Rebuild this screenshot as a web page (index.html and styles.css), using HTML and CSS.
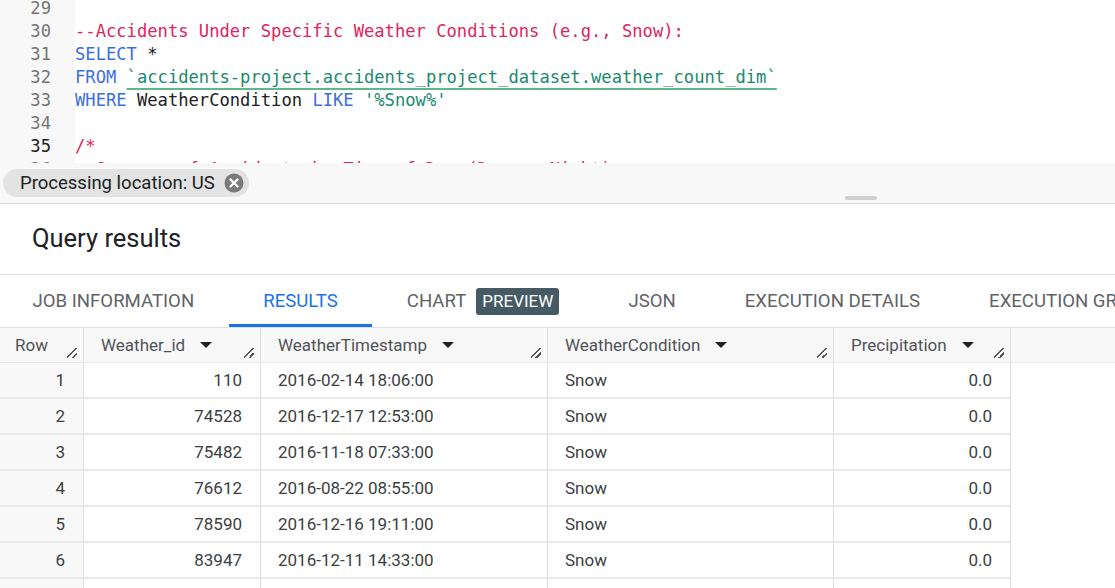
FILE: index.html
```html
<!DOCTYPE html>
<html>
<head>
<meta charset="utf-8">
<link rel="stylesheet" href="styles.css">
</head>
<body>
<div class="editor">
  <div class="gutter">
    <div class="ln">29</div>
    <div class="ln">30</div>
    <div class="ln">31</div>
    <div class="ln">32</div>
    <div class="ln">33</div>
    <div class="ln">34</div>
    <div class="ln active">35</div>
    <div class="ln">36</div>
  </div>
  <div class="code">
    <div class="cl">&nbsp;</div>
    <div class="cl"><span class="cm">--Accidents Under Specific Weather Conditions (e.g., Snow):</span></div>
    <div class="cl"><span class="kw">SELECT</span> *</div>
    <div class="cl"><span class="kw">FROM</span> <span class="str link">`accidents-project.accidents_project_dataset.weather_count_dim`</span></div>
    <div class="cl"><span class="kw">WHERE</span> WeatherCondition <span class="kw">LIKE</span> <span class="str">'%Snow%'</span></div>
    <div class="cl">&nbsp;</div>
    <div class="cl"><span class="cm">/*</span></div>
    <div class="cl"><span class="cm">- Summary of Accidents by Time of Day (Day vs Night)</span></div>
  </div>
</div>

<div class="statusbar">
  <div class="chip">
    <span class="chip-label">Processing location: US</span>
    <svg class="chip-x" width="20" height="20" viewBox="0 0 20 20"><circle cx="10" cy="10" r="9.5" fill="#7a7a7a"/><path d="M6.5 6.5 L13.5 13.5 M13.5 6.5 L6.5 13.5" stroke="#fff" stroke-width="2.4" stroke-linecap="round"/></svg>
  </div>
  <div class="grip"></div>
</div>

<div class="title">Query results</div>

<div class="tabs">
  <div class="tab">JOB INFORMATION</div>
  <div class="tab selected">RESULTS</div>
  <div class="tab">CHART <span class="badge">PREVIEW</span></div>
  <div class="tab">JSON</div>
  <div class="tab">EXECUTION DETAILS</div>
  <div class="tab">EXECUTION GRAPH</div>
</div>

<div class="grid">
  <div class="head">
    <div class="hc c0">Row<span class="rz"></span></div>
    <div class="hc c1">Weather_id<span class="arrow"></span><span class="rz"></span></div>
    <div class="hc c2">WeatherTimestamp<span class="arrow"></span><span class="rz"></span></div>
    <div class="hc c3">WeatherCondition<span class="arrow"></span><span class="rz"></span></div>
    <div class="hc c4">Precipitation<span class="arrow"></span><span class="rz"></span></div>
  </div>
  <div class="row"><div class="dc c0 num">1</div><div class="dc c1 num">110</div><div class="dc c2">2016-02-14 18:06:00</div><div class="dc c3">Snow</div><div class="dc c4 num">0.0</div></div>
  <div class="row"><div class="dc c0 num">2</div><div class="dc c1 num">74528</div><div class="dc c2">2016-12-17 12:53:00</div><div class="dc c3">Snow</div><div class="dc c4 num">0.0</div></div>
  <div class="row"><div class="dc c0 num">3</div><div class="dc c1 num">75482</div><div class="dc c2">2016-11-18 07:33:00</div><div class="dc c3">Snow</div><div class="dc c4 num">0.0</div></div>
  <div class="row"><div class="dc c0 num">4</div><div class="dc c1 num">76612</div><div class="dc c2">2016-08-22 08:55:00</div><div class="dc c3">Snow</div><div class="dc c4 num">0.0</div></div>
  <div class="row"><div class="dc c0 num">5</div><div class="dc c1 num">78590</div><div class="dc c2">2016-12-16 19:11:00</div><div class="dc c3">Snow</div><div class="dc c4 num">0.0</div></div>
  <div class="row"><div class="dc c0 num">6</div><div class="dc c1 num">83947</div><div class="dc c2">2016-12-11 14:33:00</div><div class="dc c3">Snow</div><div class="dc c4 num">0.0</div></div>
  <div class="row"><div class="dc c0 num">7</div><div class="dc c1 num">84512</div><div class="dc c2">2016-12-05 09:12:00</div><div class="dc c3">Snow</div><div class="dc c4 num">0.0</div></div>
</div>
</body>
</html>
```

FILE: styles.css
```css
* { box-sizing: border-box; }
html, body {
  margin: 0;
  padding: 0;
}
body {
  width: 1115px;
  height: 588px;
  overflow: hidden;
  background: #fff;
  font-family: Roboto, "Liberation Sans", sans-serif;
  color: #202124;
}

/* Editor */
.editor {
  height: 163px;
  overflow: hidden;
  display: flex;
  background: #fff;
}
.gutter {
  width: 75px;
  flex: none;
  background: #f8f8f8;
  margin-top: -3px;
  padding-right: 24px;
  text-align: right;
}
.ln, .cl {
  height: 23px;
  line-height: 23px;
  font-family: "DejaVu Sans Mono", "Liberation Mono", monospace;
  font-size: 17.15px;
  white-space: pre;
}
.ln { color: #757575; }
.ln.active { color: #202124; }
.code {
  margin-top: -3px;
  flex: 1;
  overflow: hidden;
  color: #202124;
}
.cm { color: #e0245e; }
.kw { color: #3b6fe0; }
.str { color: #1a8a6e; }
.link {
  text-decoration: underline;
  text-decoration-color: #5cb88a;
  text-decoration-thickness: 2px;
  text-underline-offset: 5px;
}

/* status bar */
.statusbar {
  position: relative;
  height: 41px;
  background: #f8f8f8;
  border-bottom: 1px solid #dadada;
  padding: 6px 0 0 3px;
}
.chip {
  display: inline-flex;
  align-items: center;
  height: 28px;
  padding: 0 5px 0 17px;
  border-radius: 14px;
  background: #e3e3e3;
}
.chip-label {
  font-size: 18.5px;
  color: #202124;
  margin-right: 9px;
}
.chip-x { display: block; }
.grip {
  position: absolute;
  left: 845px;
  top: 33px;
  width: 32px;
  height: 4px;
  border-radius: 2px;
  background: #d0d0d0;
}

/* title */
.title {
  height: 71px;
  padding-left: 32px;
  line-height: 68px;
  font-size: 25.5px;
  color: #202124;
  border-bottom: 1px solid #e0e0e0;
}

/* tabs */
.tabs {
  height: 52px;
  display: flex;
  margin-left: -2px;
  white-space: nowrap;
  overflow: hidden;
}
.tab {
  flex: none;
  display: flex;
  align-items: center;
  padding: 0 34.5px;
  font-size: 18.6px;
  color: #5f6368;
  border-bottom: 3px solid transparent;
  padding-top: 3px;
}
.tab.selected {
  color: #1a73e8;
  border-bottom-color: #1a73e8;
}
.badge {
  display: inline-block;
  margin-left: 10px;
  height: 27px;
  line-height: 27px;
  padding: 0 6px;
  border-radius: 3px;
  background: #455a64;
  color: #fff;
  font-size: 17px;
}

/* grid */
.grid {
  border-top: 1px solid #e0e0e0;
}
.head {
  display: flex;
  height: 35px;
  background: #f8f8f8;
  border-bottom: 1px solid #e8e8e8;
}
.row {
  display: flex;
  width: 1011px;
  height: 36px;
  border-bottom: 2px solid #e8e8e8;
}
.hc, .dc {
  flex: none;
  display: flex;
  align-items: center;
  border-right: 1px solid #dedede;
  font-size: 17px;
  padding: 0 17px;
  white-space: nowrap;
}
.hc {
  position: relative;
  color: #505358;
  padding-bottom: 1px;
}
.dc { color: #3c4043; }
.c0 { width: 84px; }
.c1 { width: 177px; }
.c2 { width: 287px; }
.c3 { width: 286px; }
.c4 { width: 177px; }
.c0.hc { padding-left: 15px; }
.dc.c0 { background: #f8f8f8; }
.num {
  justify-content: flex-end;
  padding-right: 18px;
}
.arrow {
  width: 0;
  height: 0;
  margin-left: 15px;
  border-left: 6px solid transparent;
  border-right: 6px solid transparent;
  border-top: 6px solid #202124;
}
.rz {
  position: absolute;
  right: 6px;
  bottom: 4px;
  width: 10px;
  height: 10px;
  background:
    linear-gradient(135deg, transparent 42%, #555 42%, #555 54%, transparent 54%) no-repeat,
    linear-gradient(135deg, transparent 70%, #555 70%, #555 82%, transparent 82%) no-repeat;
}
```
